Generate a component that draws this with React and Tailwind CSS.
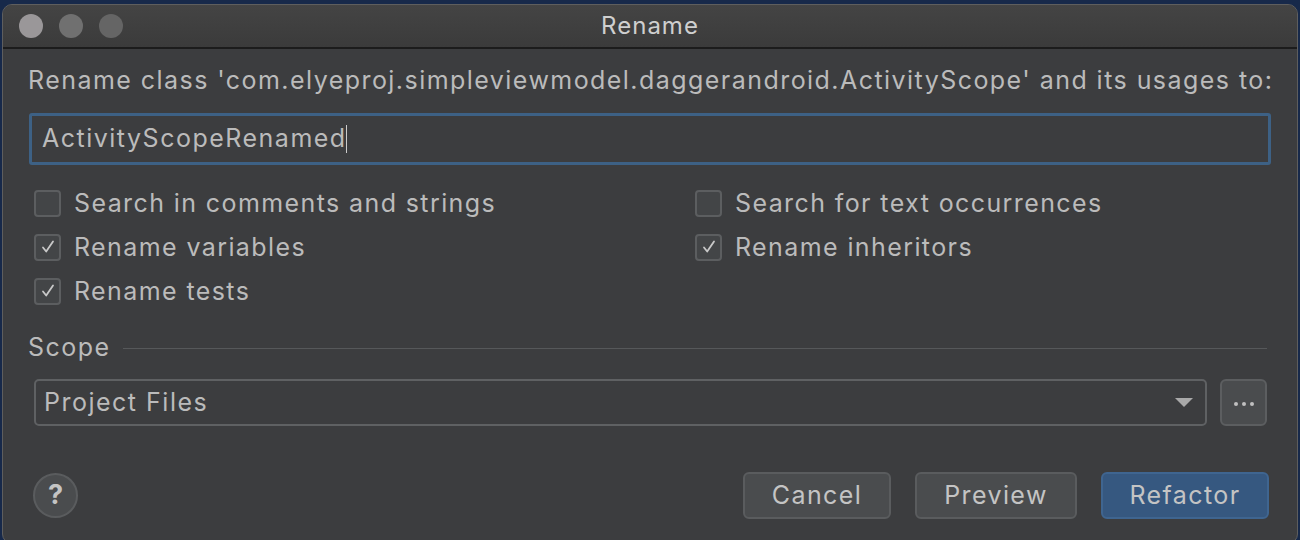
import React from "react";

const font = { fontFamily: "Inter, 'Noto Sans', sans-serif" };

function Check({ checked, label }) {
  return (
    <label className="flex items-center h-[44px]">
      <span className="w-[27px] h-[27px] rounded-[4px] border-2 border-[#5c5e60] bg-[#434547] flex items-center justify-center">
        {checked && (
          <svg width="18" height="18" viewBox="0 0 18 18" fill="none">
            <path d="M4 9.5 L7.2 13.5 L14 3.5" stroke="#c8c8c8" strokeWidth="1.8" strokeLinecap="round" strokeLinejoin="round" />
          </svg>
        )}
      </span>
      <span className="ml-[13px] text-[25px] leading-[30px] text-[#bbbbbb] tracking-[1.4px]">{label}</span>
    </label>
  );
}

function Button({ children, primary, className = "" }) {
  return (
    <button
      className={`h-[47px] rounded-[6px] border-2 text-[25px] tracking-[1.4px] text-[#c4c4c4] ${
        primary ? "bg-[#365880] border-[#3f6590]" : "bg-[#4a4c4e] border-[#5a5c5e]"
      } ${className}`}
    >
      {children}
    </button>
  );
}

export default function App() {
  return (
    <div className="w-[1300px] h-[540px] bg-[#17294a] pt-[4px] px-[2px] overflow-hidden" style={font}>
      <div className="h-[540px] rounded-[10px] border border-[#5e5e5e] bg-[#3c3d3f] overflow-hidden flex flex-col">
        {/* Title bar */}
        <div className="h-[44px] shrink-0 bg-gradient-to-b from-[#444444] to-[#3b3b3b] border-b-2 border-[#1c1c1c] flex items-center relative">
          <div className="flex gap-[16px] pl-[16px]">
            <span className="w-[24px] h-[24px] rounded-full bg-[#9a9799]" />
            <span className="w-[24px] h-[24px] rounded-full bg-[#707070]" />
            <span className="w-[24px] h-[24px] rounded-full bg-[#656565]" />
          </div>
          <div className="absolute inset-0 flex items-center justify-center text-[24px] text-[#cfcfcf] tracking-[1px]">
            Rename
          </div>
        </div>

        {/* Body */}
        <div className="flex-1 flex flex-col pl-[25px] pr-[26px]">
          <p className="mt-[16px] text-[25px] leading-[30px] text-[#bbbbbb] tracking-[1.45px] whitespace-nowrap">
            Rename class 'com.elyeproj.simpleviewmodel.daggerandroid.ActivityScope' and its usages to:
          </p>

          <div className="mt-[18px] ml-[1px] h-[52px] border-[3px] border-[#3d6185] rounded-[3px] flex items-center pl-[10px]">
            <span className="text-[25px] text-[#bbbbbb] tracking-[1.5px]">ActivityScopeRenamed</span>
            <span className="w-[1.5px] h-[28px] bg-[#cccccc] -ml-[1px]" />
          </div>

          <div className="mt-[16px] grid grid-cols-[661px_1fr] pl-[6px]">
            <div className="flex flex-col">
              <Check label="Search in comments and strings" />
              <Check checked label="Rename variables" />
              <Check checked label="Rename tests" />
            </div>
            <div className="flex flex-col">
              <Check label="Search for text occurrences" />
              <Check checked label="Rename inheritors" />
            </div>
          </div>

          <div className="mt-[20px] flex items-center h-[30px]">
            <span className="text-[25px] text-[#bbbbbb] tracking-[1.5px]">Scope</span>
            <div className="flex-1 ml-[12px] mr-[4px] h-px bg-[#56585a]" />
          </div>

          <div className="mt-[16px] flex items-center gap-[13px] pl-[6px] pr-[4px]">
            <div className="flex-1 h-[47px] border-2 border-[#5f6163] rounded-[5px] flex items-center justify-between pl-[8px] pr-[12px]">
              <span className="text-[25px] text-[#bbbbbb] tracking-[1.5px]">Project Files</span>
              <svg width="18" height="10" viewBox="0 0 18 10">
                <path d="M0 0 H18 L9 9 Z" fill="#a9a9a9" />
              </svg>
            </div>
            <div className="w-[47px] h-[47px] rounded-[6px] border-2 border-[#5c5e60] bg-[#4a4c4e] flex items-center justify-center gap-[4px] pt-[2px]">
              <span className="w-[4px] h-[4px] rounded-full bg-[#c0c0c0]" />
              <span className="w-[4px] h-[4px] rounded-full bg-[#c0c0c0]" />
              <span className="w-[4px] h-[4px] rounded-full bg-[#c0c0c0]" />
            </div>
          </div>

          <div className="mt-[46px] flex items-center">
            <div className="ml-[5px] w-[45px] h-[45px] rounded-full bg-[#4a4c4e] border-2 border-[#5a5c5e] flex items-center justify-center text-[27px] font-bold text-[#c4c4c4]">
              ?
            </div>
            <div className="ml-auto flex gap-[24px] mr-[2px]">
              <Button className="w-[148px]">Cancel</Button>
              <Button className="w-[162px]">Preview</Button>
              <Button primary className="w-[168px]">Refactor</Button>
            </div>
          </div>
        </div>
      </div>
    </div>
  );
}
